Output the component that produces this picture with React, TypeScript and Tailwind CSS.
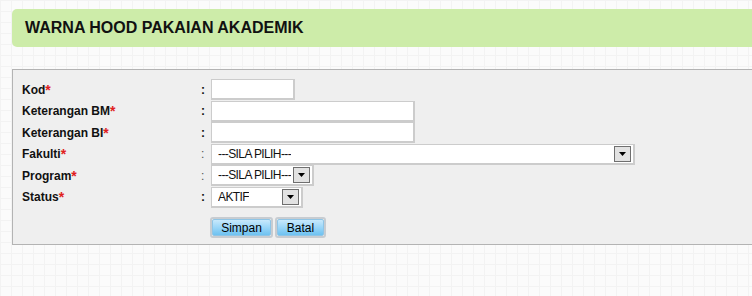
import React from 'react'

type Row = {
  label: string
  boldColon?: boolean
  field: React.ReactNode
}

function Arrow() {
  return (
    <div className="shrink-0 w-[17px] h-[16px] border border-[#6f6f6f] bg-[#e2e2e2] flex items-center justify-center">
      <svg width="7" height="4" viewBox="0 0 7 4"><path d="M0 0h7L3.5 4z" fill="#000" /></svg>
    </div>
  )
}

function TextBox({ w }: { w: string }) {
  return <div className={`${w} h-[21px] bg-white border border-[#cccccc] border-b-2 border-r-2`} />
}

function Select({ w, text }: { w: string; text: string }) {
  return (
    <div className={`${w} h-[21px] bg-white border border-[#cccccc] border-b-2 border-r-2 flex items-center justify-between pl-[6px] pr-[2px] text-[12px] text-[#111]`}>
      <span className="whitespace-nowrap overflow-hidden tracking-[-0.6px]">{text}</span>
      <Arrow />
    </div>
  )
}

function Btn({ label, w }: { label: string; w: string }) {
  return (
    <div className={`${w} h-[21px] rounded-[3px] border-2 border-[#c7ccd1] flex`}>
      <div className="flex-1 rounded-[2px] bg-[linear-gradient(#c8e9fc,#9ad6f8_50%,#6ec2f1)] border border-[#8fc5e6] flex items-center justify-center text-[12px] text-black">
        {label}
      </div>
    </div>
  )
}

export default function App() {
  const rows: Row[] = [
    { label: 'Kod', boldColon: true, field: <TextBox w="w-[84px]" /> },
    { label: 'Keterangan BM', boldColon: true, field: <TextBox w="w-[204px]" /> },
    { label: 'Keterangan BI', boldColon: true, field: <TextBox w="w-[204px]" /> },
    { label: 'Fakulti', field: <Select w="w-[424px]" text="---SILA PILIH---" /> },
    { label: 'Program', field: <Select w="w-[103px]" text="---SILA PILIH---" /> },
    { label: 'Status', boldColon: true, field: <Select w="w-[92px]" text="AKTIF" /> },
  ]

  return (
    <div className="w-[752px] h-[296px] overflow-hidden bg-[#fbfbfb] bg-[image:linear-gradient(#f3f3f3_1px,transparent_1px),linear-gradient(90deg,#f3f3f3_1px,transparent_1px)] bg-[size:11px_11px] font-['Liberation_Sans',Arial,sans-serif] pt-[9px] pl-[12px]">
      <div className="w-[760px] h-[38px] bg-[#cdeca9] rounded-l-[5px] flex items-center pl-[13px]">
        <h1 className="text-[16px] font-bold text-[#111]">WARNA HOOD PAKAIAN AKADEMIK</h1>
      </div>

      <div className="mt-[22px] w-[760px] h-[176px] bg-[#efefef] border border-[#b3b3b3] border-r-0 pt-[9px] pl-[9px]">
        <div className="flex flex-col">
          {rows.map((r) => (
            <div key={r.label} className="flex items-center h-[21.5px]">
              <div className="w-[179px] text-[12px] font-bold text-[#111] flex items-center">
                {r.label}<span className="text-[#e02020] text-[14px] leading-none">*</span>
              </div>
              <div className={`w-[10px] text-[12px] ${r.boldColon ? 'font-bold text-[#111]' : 'text-[#555]'}`}>:</div>
              {r.field}
            </div>
          ))}
        </div>
        <div className="flex gap-[2px] ml-[188px] mt-[9px]">
          <Btn label="Simpan" w="w-[63px]" />
          <Btn label="Batal" w="w-[51px]" />
        </div>
      </div>
    </div>
  )
}
